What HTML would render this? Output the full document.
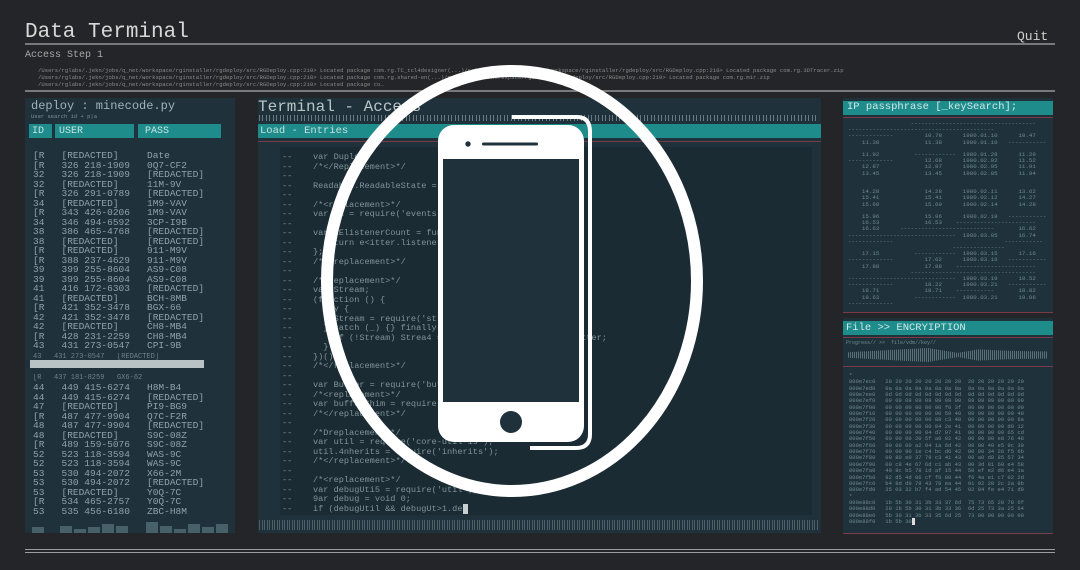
<!DOCTYPE html>
<html><head><meta charset="utf-8"><style>
*{margin:0;padding:0;box-sizing:border-box}
body{width:1080px;height:570px;background:#242528;overflow:hidden;position:relative;font-family:"Liberation Mono",monospace;color:#8b9ea4}
.a{position:absolute;white-space:pre}
.panel{position:absolute;background:#1f323b}
.teal{position:absolute;background:#1f8c8c;color:#c4dede}
.hr{position:absolute;height:2px;background:#77797c}
</style></head><body>
<div class="a" style="left:25px;top:21px;font-size:21px;color:#d8d8d8">Data Terminal</div>
<div class="a" style="left:1017px;top:29px;font-size:13px;color:#d0d0d0">Quit</div>
<div class="hr" style="left:25px;top:43px;width:1030px"></div>
<div class="a" style="left:25px;top:50px;font-size:10px;color:#a8a8a8">Access Step 1</div>
<div class="a" style="left:38px;top:67px;font-size:5.6px;line-height:7px;color:#8a8a8a">/Users/rglabs/.jekn/jobs/q_net/workspace/rginstaller/rgdeploy/src/RGDeploy.cpp:210> Located package com.rg.TC_tcl4designer(...)/rglabs/.jekn/jobs/q_net/workspace/rginstaller/rgdeploy/src/RGDeploy.cpp:210> Located package com.rg.3DTracer.zip
/Users/rglabs/.jekn/jobs/q_net/workspace/rginstaller/rgdeploy/src/RGDeploy.cpp:210> Located package com.rg.shared-en(...)/rglabs/q_net/workspace/rginstaller/rgdeploy/src/RGDeploy.cpp:210> Located package com.rg.mir.zip
/Users/rglabs/.jekn/jobs/q_net/workspace/rginstaller/rgdeploy/src/RGDeploy.cpp:210> Located package co…</div>
<div class="hr" style="left:25px;top:90px;width:1030px"></div>

<!-- left panel -->
<div class="panel" style="left:25px;top:98px;width:210px;height:435px"></div>
<div class="a" style="left:31px;top:99px;font-size:12px;color:#9fb3b8">deploy : minecode.py</div>
<div class="a" style="left:31px;top:113px;font-size:5.5px;color:#7d9096">User search id + p|a</div>
<div class="teal" style="left:29px;top:124px;width:23px;height:14px"></div>
<div class="teal" style="left:55px;top:124px;width:79px;height:14px"></div>
<div class="teal" style="left:138px;top:124px;width:83px;height:14px"></div>
<div class="a" style="left:32px;top:126px;font-size:10px;color:#c8e4e4">ID</div>
<div class="a" style="left:59px;top:126px;font-size:10px;color:#c8e4e4">USER</div>
<div class="a" style="left:145px;top:126px;font-size:10px;color:#c8e4e4">PASS</div>
<div class="a" style="left:33px;top:151px;font-size:9.5px;line-height:9.5px;color:#8fa2a8">[R   [REDACTED]     Date
[R   326 218-1909   0Q7-CF2
32   326 218-1909   [REDACTED]
32   [REDACTED]     11M-9V
[R   326 291-0789   [REDACTED]
34   [REDACTED]     1M9-VAV
[R   343 426-0206   1M9-VAV
34   346 494-6592   3CP-I9B
38   386 465-4768   [REDACTED]
38   [REDACTED]     [REDACTED]
[R   [REDACTED]     911-M9V
[R   388 237-4629   911-M9V
39   399 255-8604   AS9-C08
39   399 255-8604   AS9-C08
41   416 172-6303   [REDACTED]
41   [REDACTED]     BCH-8MB
[R   421 352-3478   BGX-66
42   421 352-3478   [REDACTED]
42   [REDACTED]     CH8-MB4
[R   428 231-2259   CH8-MB4
43   431 273-0547   CPI-9B
<span style="font-size:7px;opacity:.7">43   431 273-0547   [REDACTED]</span>

<span style="font-size:7px;opacity:.7">[R   437 181-8259   GX6-62</span>
44   449 415-6274   H8M-B4
44   449 415-6274   [REDACTED]
47   [REDACTED]     PI9-BG9
[R   487 477-9904   Q7C-F2R
48   487 477-9904   [REDACTED]
48   [REDACTED]     S9C-08Z
[R   489 159-5076   S9C-08Z
52   523 118-3594   WAS-9C
52   523 118-3594   WAS-9C
53   530 494-2072   X66-2M
53   530 494-2072   [REDACTED]
53   [REDACTED]     Y0Q-7C
[R   534 465-2757   Y0Q-7C
53   535 456-6180   ZBC-H8M</div>
<div class="a" style="left:30px;top:360px;width:174px;height:8px;background:#b9c2c4"></div>
<div class="a" style="left:32px;top:527px;width:12px;height:6px;background:#48606a"></div>
<div class="a" style="left:60px;top:526px;width:12px;height:7px;background:#48606a"></div>
<div class="a" style="left:74px;top:529px;width:12px;height:4px;background:#48606a"></div>
<div class="a" style="left:88px;top:527px;width:12px;height:6px;background:#48606a"></div>
<div class="a" style="left:102px;top:524px;width:12px;height:9px;background:#48606a"></div>
<div class="a" style="left:116px;top:526px;width:12px;height:7px;background:#48606a"></div>
<div class="a" style="left:146px;top:522px;width:12px;height:11px;background:#48606a"></div>
<div class="a" style="left:160px;top:526px;width:12px;height:7px;background:#48606a"></div>
<div class="a" style="left:174px;top:529px;width:12px;height:4px;background:#48606a"></div>
<div class="a" style="left:188px;top:524px;width:12px;height:9px;background:#48606a"></div>
<div class="a" style="left:202px;top:527px;width:12px;height:6px;background:#48606a"></div>
<div class="a" style="left:216px;top:524px;width:12px;height:9px;background:#48606a"></div>

<!-- center panel -->
<div class="panel" style="left:258px;top:98px;width:563px;height:435px"></div>
<div class="a" style="left:258px;top:98px;font-size:16px;color:#b8c4c6">Terminal - Access</div>
<div class="a" style="left:259px;top:115px;width:560px;height:6px;background:repeating-linear-gradient(90deg,#8a9ca0 0 1px,transparent 1px 3px,#8a9ca0 3px 4px,transparent 4px 7px);opacity:.7"></div>
<div class="teal" style="left:258px;top:124px;width:563px;height:14px"></div>
<div class="a" style="left:260px;top:125px;font-size:10.5px;color:#c4e0e0">Load - Entries</div>
<div class="a" style="left:258px;top:141px;width:563px;height:1px;background:#7a3a48"></div>
<div class="a" style="left:280px;top:147px;width:532px;height:368px;background:#1a2b33"></div>
<div class="a" style="left:282px;top:153px;font-size:8.6px;line-height:9.5px;color:#7f9499">--    var Duplex;
--    /*&lt;/Replacement&gt;*/
--
--    Readable.ReadableState = ReadableState;
--
--    /*&lt;replacement&gt;*/
--    var EE = require('events').EventEmitter;
--
--    var EElistenerCount = function (emitter, type) {
--      return e&lt;itter.listeners(type).length;
--    };
--    /*&lt;/replacement&gt;*/
--
--    /*&lt;replacement&gt;*/
--    var Stream;
--    (function () {
--      try {
--        Stream = require('st' + 'rea&amp;');
--      } catch (_) {} finally {
--        if (!Stream) Strea4 = require('ev%nts').EventEmitter;
--      }
--    })();
--    /*&lt;/replacement&gt;*/
--
--    var Buffer = require('buffer').Buffer;
--    /*&lt;replacement&gt;*/
--    var bufferShim = require('buffer-shims');
--    /*&lt;/replacement&gt;*/
--
--    /*Dreplacement&gt;*/
--    var util = require('core-util-is');
--    util.4nherits = require('inherits');
--    /*&lt;/replacement&gt;*/
--
--    /*&lt;replacement&gt;*/
--    var debugUti5 = require('util');
--    9ar debug = void 0;
--    if (debugUtil &amp;&amp; debugUt&gt;1.de<span style="background:#c8d0d2">&nbsp;</span></div>
<div class="a" style="left:259px;top:520px;width:560px;height:10px;background:repeating-linear-gradient(90deg,#5f7479 0 1px,transparent 1px 3px,#5f7479 3px 4px,transparent 4px 5px);opacity:.7"></div>

<!-- right panels -->
<div class="panel" style="left:843px;top:98px;width:210px;height:214px"></div>
<div class="teal" style="left:843px;top:101px;width:210px;height:14px"></div>
<div class="a" style="left:847px;top:101px;font-size:10.5px;color:#d0e8e8">IP passphrase [_keySearch];</div>
<div class="a" style="left:843px;top:117px;width:210px;height:1px;background:#7a3a48"></div>
<div class="a" style="left:848px;top:121px;font-size:5.8px;line-height:6.2px;color:#6f8990">                  ------------------------------------
------------------------------------------
-------------         10.78      1980.01.10      10.47
    11.38             11.38      1980.01.10   -----------

    11.92          ------------  1980.01.28      11.29
-------------         12.68      1980.02.02      11.52
    12.87             12.87      1980.02.05      11.91
    13.45             13.45      1980.02.05      11.94


    14.28             14.28      1980.02.11      13.62
    15.41             15.41      1980.02.12      14.27
    15.60             15.60      1980.02.14      14.28

    15.96             15.96      1980.02.18   -----------
    16.53             16.53    -----------------------
    16.63      ---------------------------       16.62
-------------------------------  1980.03.05      16.74
-------------                                -----------
                              ---------------
    17.15          ------------  1980.03.15      17.16
-------------         17.62      1980.03.16   -----------
    17.88             17.88    -----------------------
                  ------------------------------------
-------------------------------  1980.03.19      18.52
-------------         18.22      1980.03.21   -----------
    18.71             18.71    -----------       18.82
    19.63          ------------  1980.03.21      19.06
-------------</div>
<div class="a" style="left:843px;top:312px;width:210px;height:1px;background:#7a3a48"></div>
<div class="panel" style="left:843px;top:318px;width:210px;height:215px"></div>
<div class="teal" style="left:843px;top:321px;width:210px;height:14px"></div>
<div class="a" style="left:846px;top:322px;font-size:10.5px;color:#d0e8e8">File &gt;&gt; ENCRYIPTION</div>
<div class="a" style="left:843px;top:337px;width:210px;height:1px;background:#7a3a48"></div>
<div class="a" style="left:846px;top:340px;font-size:5px;color:#6f8990">Progress// &gt;&gt;  file/vdm//key//</div>
<div class="a" style="left:848px;top:348px;width:200px;height:14px;background:repeating-linear-gradient(90deg,#6b7f86 0 1px,transparent 1px 2px);opacity:.8;clip-path:polygon(0 30%,20% 15%,40% 0,55% 35%,65% 10%,80% 20%,100% 25%,100% 75%,80% 80%,65% 90%,55% 65%,40% 100%,20% 85%,0 70%)"></div>
<div class="a" style="left:843px;top:366px;width:210px;height:1px;background:#7a3a48"></div>
<div class="a" style="left:849px;top:373px;font-size:5.5px;line-height:6.35px;color:#6f8990">*
000e7ec0   20 20 20 20 20 20 20 20  20 20 20 20 20 20
000e7ed0   0a 0a 0a 0a 0a 0a 0a 0a  0a 0a 0a 0a 0a 0a
000e7ee0   0d 0d 0d 0d 0d 0d 0d 0d  0d 0d 0d 0d 0d 0d
000e7ef0   09 09 09 09 09 09 09 09  09 09 09 09 09 09
000e7f00   00 00 00 00 00 00 f0 3f  00 00 00 00 00 00
000e7f10   00 00 00 00 00 00 59 40  00 00 00 00 00 40
000e7f20   00 00 00 00 00 88 c3 40  00 00 00 00 00 6a
000e7f30   00 00 00 00 80 84 2e 41  00 00 00 00 d0 12
000e7f40   00 00 00 00 84 d7 97 41  00 00 00 00 65 cd
000e7f50   00 00 00 20 5f a0 02 42  00 00 00 e8 76 48
000e7f60   00 00 00 a2 94 1a 6d 42  00 00 40 e5 9c 30
000e7f70   00 00 90 1e c4 bc d6 42  00 00 34 26 f5 6b
000e7f80   00 80 e0 37 79 c3 41 43  00 a0 d8 85 57 34
000e7f90   00 c8 4e 67 6d c1 ab 43  00 3d 91 60 e4 58
000e7fa0   40 8c b5 78 1d af 15 44  50 ef e2 d6 e4 1a
000e7fb0   92 d5 4d 06 cf f0 80 44  f6 4a e1 c7 02 2d
000e7fc0   b4 8d d9 79 43 78 ea 44  91 02 28 2c 2a 8b
000e7fd0   35 03 32 b7 f4 ad 54 45  02 84 fe e4 71 d9
*
000e88c0   1b 5b 30 31 3b 33 37 6d  75 73 65 20 78 6f
000e88d0   20 1b 5b 30 31 3b 33 36  6d 25 73 3a 25 64
000e88e0   5b 30 31 3b 33 35 6d 25  73 00 00 00 00 00
000e88f0   1b 5b 30<span style="background:#ddd">&nbsp;</span></div>
<div class="a" style="left:843px;top:533px;width:210px;height:1px;background:#7a3a48"></div>

<div class="hr" style="left:25px;top:549px;width:1030px;height:1px;background:#9a9c9f"></div>
<div class="hr" style="left:25px;top:552px;width:1030px;height:1px;background:#9a9c9f"></div>

<!-- overlay icon -->
<svg class="a" style="left:0;top:0" width="1080" height="570" viewBox="0 0 1080 570">
<ellipse cx="512" cy="281" rx="185" ry="210" fill="none" stroke="#fff" stroke-width="12"/>
<path d="M512 117 H577 Q590 117 590 132 V434 Q590 448 576 448 H530" fill="none" stroke="#fff" stroke-width="4"/>
<rect x="438" y="125" width="146" height="317" rx="16" fill="#fff"/>
<rect x="443" y="159" width="136" height="243" fill="#1f323b"/>
<circle cx="468" cy="144" r="2.7" fill="#1f323b"/>
<rect x="482" y="142.5" width="56" height="3" rx="1.5" fill="#1f323b"/>
<circle cx="511" cy="422" r="11" fill="#1f323b"/>
</svg>
</body></html>
